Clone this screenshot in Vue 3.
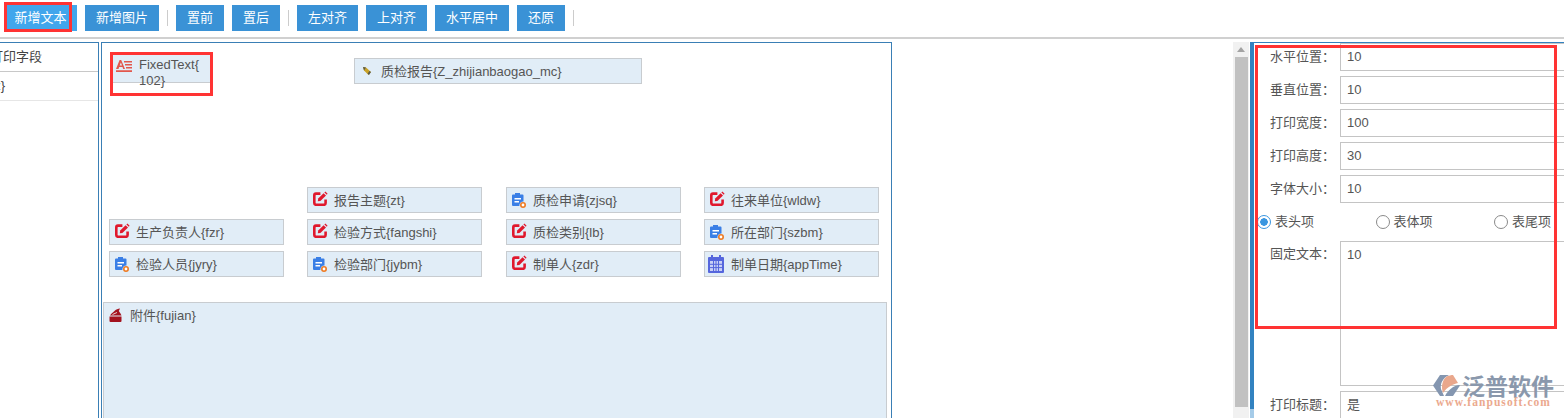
<script setup>
const tools = [
  { t: '新增文本', w: 73, cls: 'active' },
  { t: '新增图片', w: 74, sep: true },
  { t: '置前', w: 48 },
  { t: '置后', w: 48, sep: true },
  { t: '左对齐', w: 61 },
  { t: '上对齐', w: 61 },
  { t: '水平居中', w: 74 },
  { t: '还原', w: 48, sep: true }
]
const items = [
  { t: '报告主题{zt}', x: 205, y: 143, i: 'edit' },
  { t: '质检申请{zjsq}', x: 404, y: 143, i: 'doc' },
  { t: '往来单位{wldw}', x: 602, y: 143, i: 'edit' },
  { t: '生产负责人{fzr}', x: 7, y: 175, i: 'edit' },
  { t: '检验方式{fangshi}', x: 205, y: 175, i: 'edit' },
  { t: '质检类别{lb}', x: 404, y: 175, i: 'edit' },
  { t: '所在部门{szbm}', x: 602, y: 175, i: 'doc' },
  { t: '检验人员{jyry}', x: 7, y: 207, i: 'doc' },
  { t: '检验部门{jybm}', x: 205, y: 207, i: 'doc' },
  { t: '制单人{zdr}', x: 404, y: 207, i: 'edit' },
  { t: '制单日期{appTime}', x: 602, y: 207, i: 'cal' }
]
const fields = [
  { l: '水平位置：', v: '10' },
  { l: '垂直位置：', v: '10' },
  { l: '打印宽度：', v: '100' },
  { l: '打印高度：', v: '30' },
  { l: '字体大小：', v: '10' }
]
const radios = [
  { t: '表头项', on: true },
  { t: '表体项' },
  { t: '表尾项' }
]
</script>

<template>
  <div class="page">
    <header class="toolbar">
      <template v-for="b in tools" :key="b.t">
        <button class="btn" :class="b.cls" :style="{ width: b.w + 'px' }">{{ b.t }}</button>
        <i v-if="b.sep" class="sep"></i>
      </template>
    </header>

    <main class="main">
      <aside class="left">
        <div class="lrow first">打印字段</div>
        <div class="lrow second">{z}</div>
      </aside>

      <section class="canvas">
        <div class="item fixed">
          <svg class="ico" style="left:5px;top:7px" width="16" height="12" viewBox="0 0 16 12">
            <path d="M0 9 3.600 0h1.600L9 9H7.200l-.7-2H3.200l-.7 2zM3.700 5.600h2.300L4.900 2.400z" fill="#e2574c"/>
            <path d="M8 1h8v1.400H8zM9 4h7v1.400H9zM10 7h6v1.400h-6zM0 10.300h16V12H0z" fill="#e2574c"/>
          </svg>
          <span class="ft">FixedText{<br>102}</span>
        </div>

        <div class="item" style="left:252px;top:15px;width:288px">
          <svg class="ico" style="left:7px;top:7px" width="10" height="10" viewBox="0 0 10 10">
            <path d="M1 1 4 1.500 9 6 6.500 9 2 4.500z" fill="#c9a227"/>
            <path d="M1 1 4 1.500 2 4.500zM7.400 5 9 6 7 9 5.600 7.800z" fill="#5a5a4a"/>
          </svg>
          <span class="txt">质检报告{Z_zhijianbaogao_mc}</span>
        </div>

        <div v-for="it in items" :key="it.t" class="item cell" :style="{ left: it.x + 'px', top: it.y + 'px' }">
          <svg v-if="it.i === 'edit'" class="ico" style="left:5px;top:3px" width="15" height="15" viewBox="0 0 15 15">
            <path d="M12.600 8.600V12a1.800 1.800 0 0 1-1.800 1.800H3A1.800 1.800 0 0 1 1.300 12V4.400A1.800 1.800 0 0 1 3 2.600h4.400" fill="none" stroke="#e0182d" stroke-width="2.600"/>
            <path d="M4.800 10.200 5.200 7.600 10.600 2.200 13 4.600 7.400 10z" fill="#e0182d"/>
            <path d="M11.400 1.400 12.400.6 14.600 2.800 13.800 3.800z" fill="#e0182d"/>
          </svg>
          <svg v-else-if="it.i === 'doc'" class="ico" style="left:5px;top:5px" width="14" height="15" viewBox="0 0 14 15">
            <path d="M3 0h5v1.400h2.500A1 1 0 0 1 11.500 2.400V8.500A4 4 0 0 0 7.400 13H1a1 1 0 0 1-1-1V2.400a1 1 0 0 1 1-1h2z" fill="#3a7fe6"/>
            <path d="M2.500 5h6.500v1.400H2.500zM2.500 8h4.500v1.400H2.500z" fill="#fff"/>
            <circle cx="11" cy="12" r="2.200" fill="#fff" stroke="#ee7a22" stroke-width="1.600"/>
          </svg>
          <svg v-else class="ico" style="left:3px;top:3px" width="16" height="18" viewBox="0 0 16 18">
            <path d="M3 0h2v2h6V0h2v2h2a1 1 0 0 1 1 1v14a1 1 0 0 1-1 1H1a1 1 0 0 1-1-1V3a1 1 0 0 1 1-1h2z" fill="#5566dd"/>
            <path d="M2 6h12v10H2z" fill="#c9d0f5"/>
            <path d="M5.500 6v10M8 6v10M10.500 6v10M2 9.300h12M2 12.600h12" stroke="#5566dd" stroke-width="1"/>
          </svg>
          <span class="txt">{{ it.t }}</span>
        </div>

        <div class="item attach">
          <svg class="ico" style="left:5px;top:5px" width="13" height="15" viewBox="0 0 13 15">
            <path d="M1 7.500C2 5 5 4 6 2.500 7 1.500 9 .7 11 .5L9.800 3 11.500 5.500 12.500 7.500z" fill="#a3121f"/>
            <path d="M.5 8.500h12v4.500a1 1 0 0 1-1 1h-10a1 1 0 0 1-1-1z" fill="#a3121f"/>
            <path d="M3.500 6.500 8 4.500" stroke="#fff" stroke-width=".8"/>
          </svg>
          <span class="txt">附件{fujian}</span>
        </div>
      </section>

      <div class="spacer"></div>

      <div class="scrollbar">
        <span class="arrow"></span>
        <span class="thumb"></span>
      </div>

      <aside class="panel">
        <div class="form">
          <div v-for="f in fields" :key="f.l" class="row">
            <label>{{ f.l }}</label>
            <div class="input">{{ f.v }}</div>
          </div>
          <div class="radios">
            <span v-for="r in radios" :key="r.t" class="radio" :class="{ on: r.on }"><i></i>{{ r.t }}</span>
          </div>
          <div class="row tall">
            <label>固定文本：</label>
            <div class="input area">10</div>
          </div>
          <div class="row">
            <label>打印标题：</label>
            <div class="input">是</div>
          </div>
        </div>
      </aside>
    </main>

    <!-- annotations and watermark over the screenshot -->
    <i class="mark m1"></i>
    <i class="mark m2"></i>
    <i class="mark m3"></i>

    <div class="logo">
      <svg width="27" height="21" viewBox="0 0 27 21" class="hex">
        <path d="M7 0h9C10 3 7 8 8 14l3 7H7L0 10.500z" fill="#8496b0"/>
        <path d="M13 2C15 .5 19 0 20 0L25 8C20 9 14 12 10 18 8 12 9 6 13 2z" fill="#e9a78c"/>
        <path d="M12 21C15 15 20 11 26 10L27 10.500 20 21z" fill="#8496b0"/>
      </svg>
      <b class="brand">泛普软件</b>
      <em>www.fanpusoft.com</em>
    </div>
  </div>
</template>

<style scoped>
.page {
  position: relative;
  width: 1564px;
  height: 418px;
  overflow: hidden;
  background: #fff;
  font: 13px/16px "Liberation Sans", "Noto Sans CJK SC", sans-serif;
  color: #555;
}
.toolbar {
  box-sizing: border-box;
  height: 39px;
  display: flex;
  align-items: flex-start;
  padding: 5px 0 0 4px;
  gap: 8px;
  border-bottom: 2px solid #d0d0d0;
}
.btn {
  height: 26px;
  padding: 0;
  border: 0;
  background: #3a92d6;
  color: #fff;
  font: inherit;
}
.btn.active { background: #41a6ec; }
.sep {
  width: 1px;
  height: 16px;
  margin: 5px 0 0 0;
  background: #ccc;
}
.main {
  display: flex;
  height: 379px;
  padding-top: 3px;
  box-sizing: border-box;
}
.left {
  box-sizing: border-box;
  width: 99px;
  flex: none;
  border: 1px solid #3a7fb5;
  border-width: 1px 1px 0 0;
  overflow: hidden;
}
.lrow {
  margin-left: -10px;
  white-space: nowrap;
  line-height: 27px;
  height: 28px;
  color: #444;
}
.first { border-bottom: 1px solid #c8c8c8; }
.second { border-bottom: 1px solid #e6e6e6; }
.canvas {
  position: relative;
  box-sizing: border-box;
  width: 791px;
  margin-left: 2px;
  flex: none;
  border: 1px solid #3a7fb5;
  border-bottom: 0;
  overflow: hidden;
}
.item {
  position: absolute;
  box-sizing: border-box;
  height: 26px;
  background: #e1edf7;
  border: 1px solid #c8ccd0;
}
.cell { width: 175px; margin-top: 1px; }
.ico { position: absolute; }
.txt {
  position: absolute;
  left: 26px;
  top: 5px;
  white-space: nowrap;
}
.fixed {
  left: 9px;
  top: 10px;
  width: 100px;
  height: 30px;
  border-width: 0 0 1px;
}
.ft {
  position: absolute;
  left: 28px;
  top: 4px;
  white-space: nowrap;
}
.attach {
  left: 1px;
  top: 259px;
  width: 784px;
  height: 140px;
}
.spacer { flex: 1; }
.scrollbar {
  position: relative;
  width: 16px;
  margin-right: 1px;
  background: #f1f1f1;
  flex: none;
}
.arrow {
  display: block;
  width: 0;
  margin: 5px 0 0 4px;
  border: 4px solid transparent;
  border-top: 0;
  border-bottom: 5px solid #a3a3a3;
}
.thumb {
  display: block;
  width: 13px;
  height: 350px;
  margin: 5px 0 0 2px;
  background: #c1c1c1;
}
.panel {
  box-sizing: border-box;
  width: 314px;
  flex: none;
  padding-left: 4px;
  border-top: 1px solid #3282c0;
  background: linear-gradient(#3282c0 0 366px, #a5cbe8 366px) left top / 4px 100% no-repeat;
  overflow: hidden;
}
.form {
  display: flex;
  flex-direction: column;
  gap: 5px;
}
.row {
  display: flex;
  align-items: center;
  height: 28px;
  flex: none;
}
.row label {
  width: 70px;
  margin-left: 16px;
  color: #555;
  white-space: nowrap;
}
.input {
  box-sizing: border-box;
  flex: 1;
  height: 28px;
  margin-right: -10px;
  padding: 5px 6px;
  border: 1px solid #c4c4c4;
  border-right: 0;
  color: #555;
}
.radios {
  display: flex;
  height: 28px;
  align-items: center;
  padding-left: 3px;
}
.radio {
  display: flex;
  align-items: center;
  gap: 4px;
  width: 118.500px;
  flex: none;
}
.radio i {
  box-sizing: border-box;
  width: 14px;
  height: 14px;
  flex: none;
  border: 1px solid #8a8a8a;
  border-radius: 50%;
}
.radio.on i {
  border-color: #3a96e0;
  background: radial-gradient(circle, #3a96e0 0 3.500px, #fff 4px);
}
.tall {
  height: 145px;
  align-items: flex-start;
}
.tall label { padding-top: 5px; }
.area { height: 145px; padding-top: 5px; }
.mark {
  position: absolute;
  box-sizing: border-box;
  border: 3px solid #ff3333;
  pointer-events: none;
}
.m1 { left: 4px; top: 2px; width: 68px; height: 30px; }
.m2 { left: 110px; top: 52px; width: 103px; height: 44px; }
.m3 { left: 1255px; top: 45px; width: 302px; height: 284px; }
.logo {
  position: absolute;
  left: 1433px;
  top: 373px;
  width: 125px;
  height: 45px;
}
.hex { position: absolute; left: 0; top: 2px; }
.brand {
  position: absolute;
  left: 29px;
  top: 1px;
  white-space: nowrap;
  font: 700 23px/22px "Noto Sans CJK SC", sans-serif;
  color: #8a98ac;
}
.logo em {
  position: absolute;
  left: 3px;
  top: 24px;
  font: 700 11.500px/11px "Liberation Serif", serif;
  letter-spacing: 1.050px;
  color: #eba98e;
  white-space: nowrap;
}
</style>

<style>
html, body { margin: 0; overflow: hidden; }
</style>
